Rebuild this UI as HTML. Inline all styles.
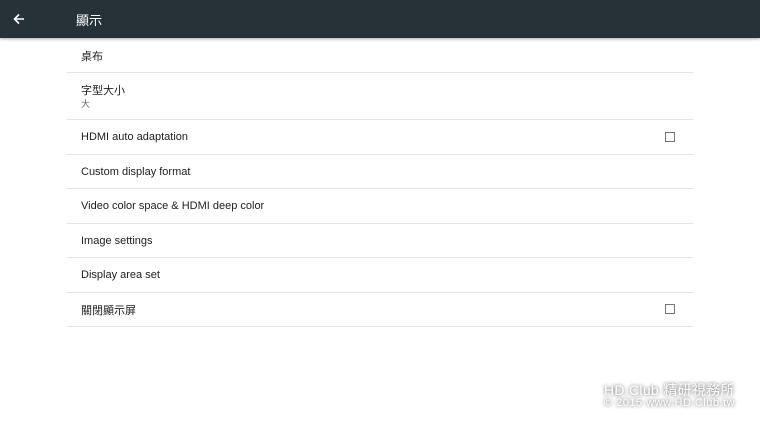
<!DOCTYPE html>
<html><head><meta charset="utf-8"><style>
body{margin:0;width:760px;height:428px;background:#fff;position:relative;overflow:hidden;font-family:"Liberation Sans","Noto Sans CJK TC",sans-serif;}
.hd{position:absolute;left:0;top:0;width:760px;height:38px;background:#263238;box-shadow:0 1px 3px rgba(0,0,0,.35);}
.hd .t{position:absolute;left:76px;top:10px;color:#fff;font-size:13px;}
.row{position:absolute;left:67px;width:626px;border-bottom:1px solid #e6e6e6;}
.row span{position:absolute;left:14px;font-size:11px;color:#212121;}
.cb{position:absolute;left:598px;width:8px;height:8px;border:1.5px solid #757575;}
.wm{position:absolute;left:604px;color:#fff;text-shadow:0 0 3px rgba(0,0,0,.45),0 0 5px rgba(0,0,0,.3);font-family:"Liberation Sans","Noto Sans CJK TC",sans-serif;white-space:nowrap;}
</style></head><body>
<div class="hd">
<svg style="position:absolute;left:12px;top:12px" width="14" height="14" viewBox="0 0 14 14"><path d="M12 7H3M7 2.5L2.5 7L7 11.5" stroke="#fff" stroke-width="1.6" fill="none"/></svg>
<div class="t">顯示</div></div>
<div class="row" style="top:38px;height:34px"><span style="top:10px">桌布</span></div>
<div class="row" style="top:73px;height:46px"><span style="top:9px">字型大小</span><span style="top:24px;font-size:9px;color:#666">大</span></div>
<div class="row" style="top:120px;height:34px"><span style="top:11px">HDMI auto adaptation</span><div class="cb" style="top:12px"></div></div>
<div class="row" style="top:155px;height:33px"><span style="top:11px">Custom display format</span></div>
<div class="row" style="top:189px;height:34px"><span style="top:11px">Video color space &amp; HDMI deep color</span></div>
<div class="row" style="top:224px;height:33px"><span style="top:11px">Image settings</span></div>
<div class="row" style="top:258px;height:34px"><span style="top:11px">Display area set</span></div>
<div class="row" style="top:293px;height:33px"><span style="top:9px">關閉顯示屏</span><div class="cb" style="top:11px"></div></div>
<div class="wm" style="top:380px;font-size:14px;letter-spacing:.3px">HD.Club 精研視務所</div>
<div class="wm" style="top:397px;font-size:11px;letter-spacing:.5px">© 2015 www.HD.Club.tw</div>
</body></html>
